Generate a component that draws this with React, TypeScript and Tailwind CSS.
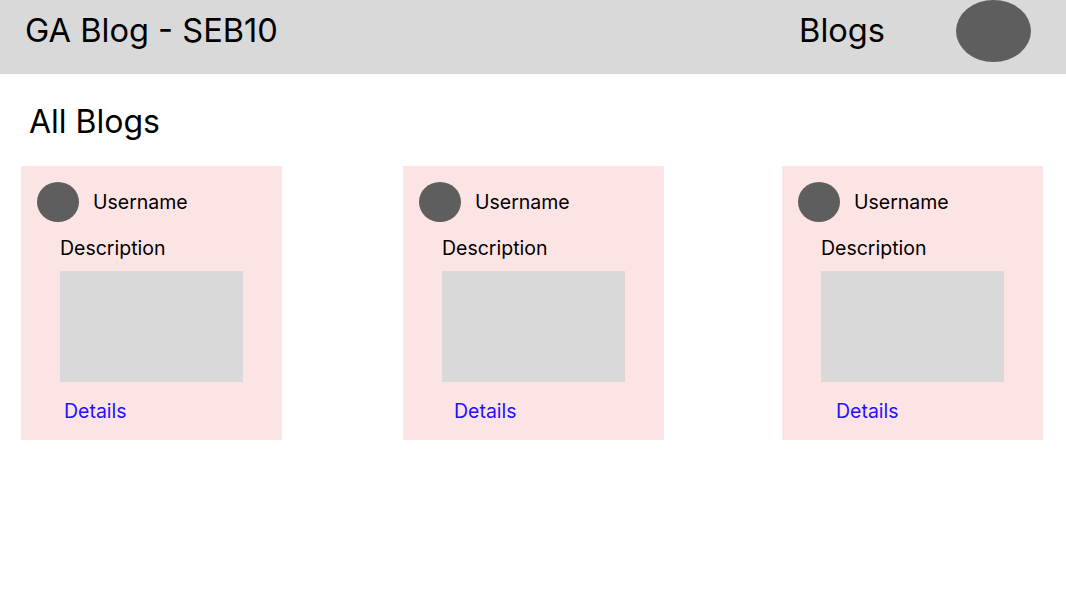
import React from "react";

const cards = [
  { wrap: "", detailsPl: "pl-[27px]" },
  { wrap: "ml-[121px]", detailsPl: "pl-[35px]" },
  { wrap: "ml-[118px]", detailsPl: "pl-[38px]" },
];

function Card({ wrap, detailsPl }: { wrap: string; detailsPl: string }) {
  return (
    <div className={`${wrap} w-[261px] h-[274px] bg-[#fde4e4] pt-[16px] pl-[16px] flex flex-col`}>
      <div className="flex items-center gap-[14px]">
        <div className="w-[42px] h-[40px] rounded-[50%] bg-[#5e5e5e]" />
        <span className="text-[19.5px] leading-[24px] text-black">Username</span>
      </div>
      <div className="pl-[23px] mt-[14px] text-[19.5px] leading-[24px] text-black">Description</div>
      <div className="ml-[23px] mt-[11px] w-[183px] h-[111px] bg-[#d9d9d9]" />
      <div className={`${detailsPl} mt-[17px] text-[19.5px] leading-[24px] text-[#2410ff]`}>Details</div>
    </div>
  );
}

export default function App() {
  return (
    <div className="w-[1066px] h-[616px] bg-white" style={{ fontFamily: "Inter, 'Noto Sans', sans-serif" }}>
      <header className="h-[74px] bg-[#d9d9d9] flex items-start pl-[25px] pr-[35px]">
        <h1 className="mt-[11px] text-[32.6px] leading-[39px] text-black">GA Blog - SEB10</h1>
        <div className="flex-1" />
        <span className="mt-[11px] text-[32.6px] leading-[39px] text-black">Blogs</span>
        <div className="ml-[71px] w-[75px] h-[62px] rounded-[50%] bg-[#5e5e5e]" />
      </header>
      <h2 className="pl-[29px] mt-[28px] text-[32px] leading-[39px] text-black">All Blogs</h2>
      <div className="mt-[25px] pl-[21px] flex">
        {cards.map((c, i) => (
          <Card key={i} wrap={c.wrap} detailsPl={c.detailsPl} />
        ))}
      </div>
    </div>
  );
}
